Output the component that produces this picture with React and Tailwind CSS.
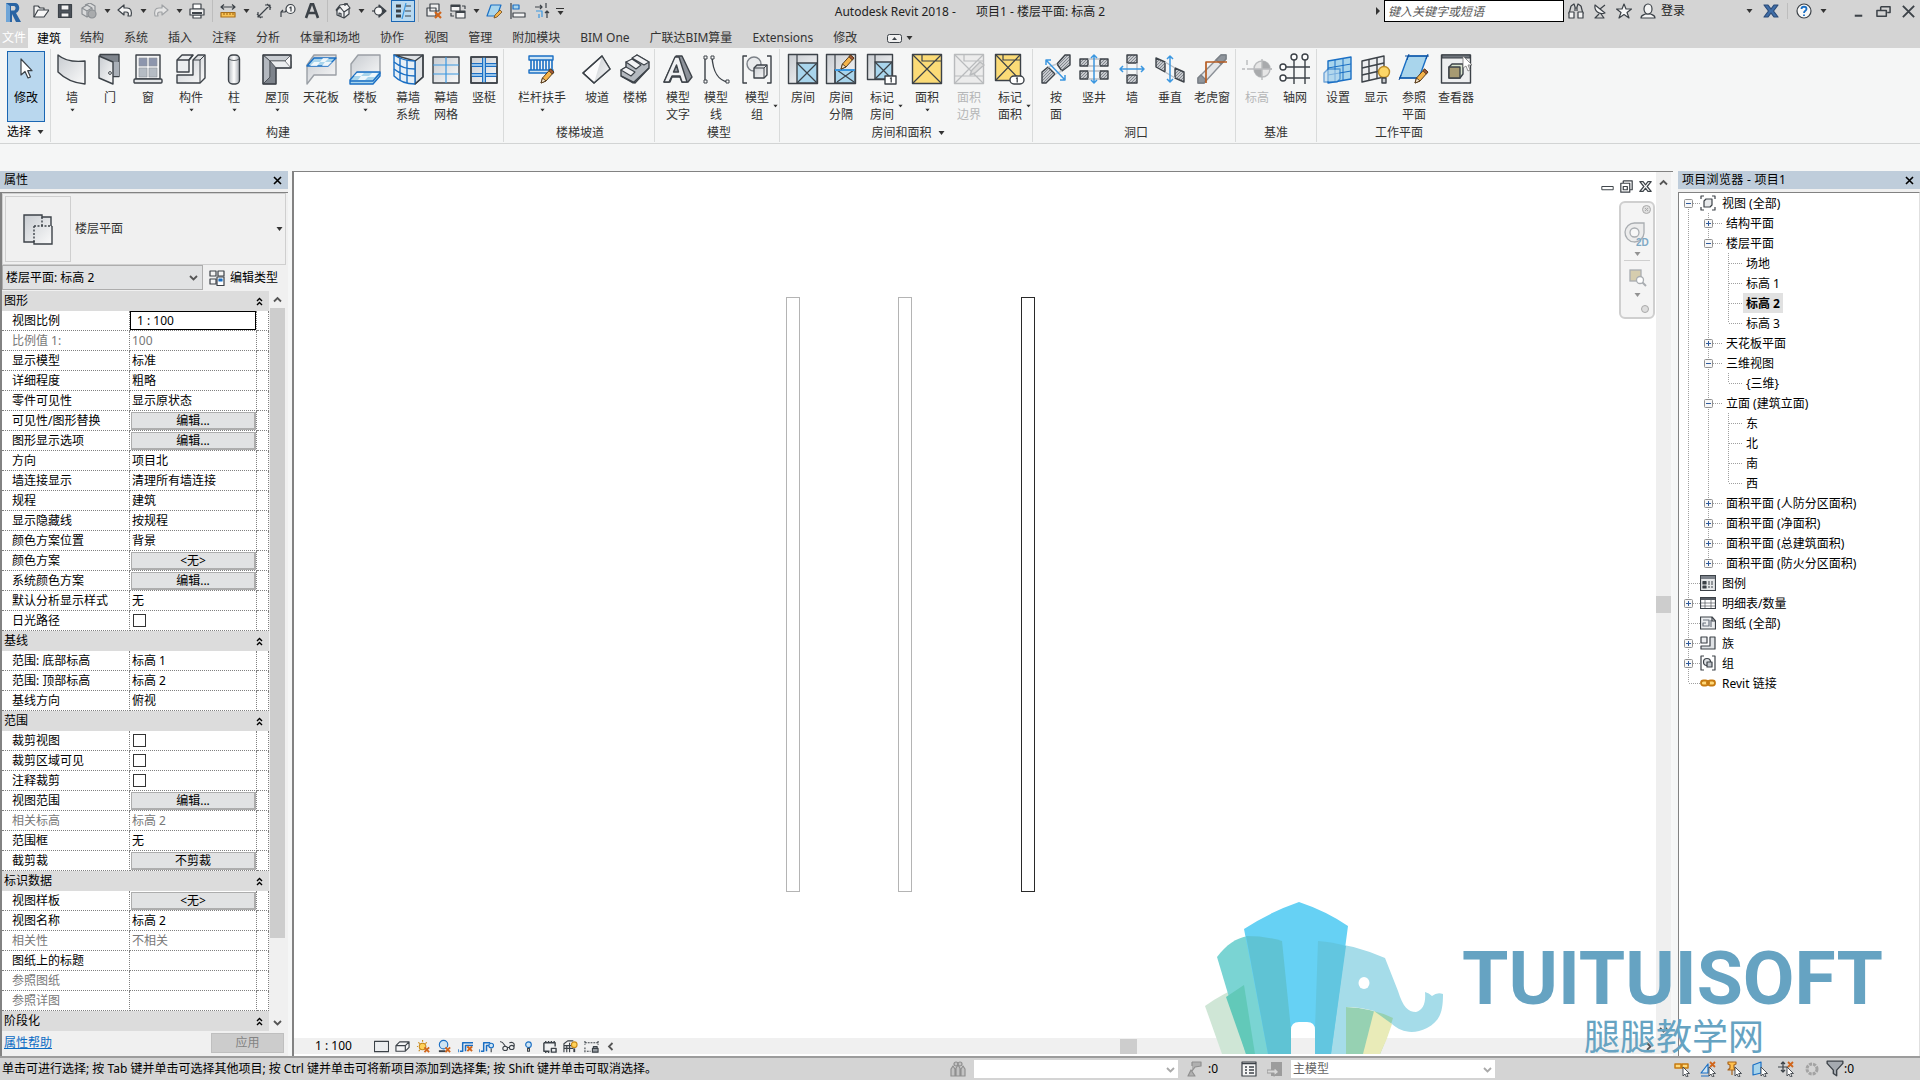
import { useState } from "react";
import clsx from "clsx";

const INK = "#3c4248";
const BLUE = "#1a6fc4";
const SKY = "#a9d5ec";

function Pencil({ x = 0, y = 0 }) {
  return (
    <g transform={`translate(${x} ${y})`} strokeWidth="1">
      <path d="M1 15 L2.5 10 L10.5 1 L14 4 L6 13 Z" fill="#f5b44a" stroke="#5a3d1c" />
      <path d="M9 2.8 L10.5 1 L14 4 L12.3 6 Z" fill="#a55a3c" stroke="#5a3d1c" />
      <path d="M1 15 L2.5 10 L6 13 Z" fill="#f8ead2" stroke="#5a3d1c" />
    </g>
  );
}

function Icon32({ children }) {
  return (
    <svg width="32" height="32" viewBox="0 0 32 32" fill="none" stroke={INK} strokeWidth="1.4" strokeLinejoin="round" aria-hidden="true">
      {children}
    </svg>
  );
}

const TOOL_ICONS = {
  cursor: <path d="M11 7 V23 L15 19.5 L18 26 L20.5 25 L17.7 18.7 H22 Z" fill="#fff" strokeWidth="1.2" />,
  wall: <path d="M2 2 C9 8 20 9 29 8 V31 C17 30 8 25 2 19 Z" fill="url(#steel)" />,
  door: (
    <>
      <rect x="6" y="1.5" width="19" height="22" fill="#7f858d" />
      <path d="M19 9 H25 V23 H19 Z" fill="#aab0b8" stroke="none" />
      <path d="M5 3 L19 9 V31 L5 25 Z" fill="url(#steel)" />
      <circle cx="16" cy="20" r="1.4" fill="#fff" strokeWidth="1" />
    </>
  ),
  window: (
    <>
      <rect x="4" y="2" width="24" height="24" fill="#f2f3f4" />
      <g fill="#8d96ad" stroke="#8d949c" strokeWidth=".6">
        <path d="M7 5 H15 V13 H7 Z M17 5 H25 V13 H17 Z" />
        <path d="M7 15 H15 V24 H7 Z M17 15 H25 V24 H17 Z" fill="#b5bcc4" />
      </g>
      <rect x="2" y="26" width="28" height="4" rx="1" fill="#e6e8ea" />
    </>
  ),
  component: (
    <>
      <path d="M2 7 L7 2 H18 L14 7 V19 H2 Z" fill="#eceef0" />
      <path d="M2 7 H14 L18 2" />
      <path d="M18 7 L23 2 H30 V25 L25 30 H2 V22 H18 Z" fill="url(#steel)" />
      <path d="M18 7 H25 L30 2 M25 7 V30" strokeWidth="1" />
    </>
  ),
  column: (
    <>
      <rect x="10.5" y="2" width="11" height="29" rx="4" fill="url(#steelH)" />
      <path d="M11 6 C13 8 19 8 21 6" strokeWidth=".8" />
    </>
  ),
  roof: (
    <>
      <path d="M2 2 H30 L24 8 H9 Z" fill="#c9cdd2" strokeWidth=".8" />
      <path d="M9 8 H30 V15 H15 Z" fill="#eceef0" strokeWidth=".6" />
      <path d="M2 2 L9 8 V24 L2 31 Z" fill="#b3b8bf" strokeWidth=".8" />
      <path d="M9 8 L15 15 V31 H2 L9 24 Z" fill="#7d838b" strokeWidth=".6" />
      <path d="M24 8 L30 2 V15 Z" fill="#f8f8f9" strokeWidth=".6" />
      <path d="M2 2 H30 V15 H15 V31 H2 Z" />
    </>
  ),
  ceiling: (
    <>
      <path d="M2 12 L9 2 H31 V22 H9 L2 31 Z" fill="url(#steel)" stroke="#9a9fa5" />
      <path d="M2 13 L9 5 H31 L23 13 Z" fill={SKY} stroke={BLUE} />
      <path d="M9 9 H15 L18 5 H24 L20 9 H27 L23 13 H17 L20 9 H15 L12 13 H5 Z" fill="#fff" stroke="none" opacity=".8" />
    </>
  ),
  floor: (
    <>
      <path d="M2 19 V11 L9 2 H31 V20 H9 L2 28 Z" fill="url(#steel)" stroke="#9a9fa5" />
      <path d="M1 27 L8 19 H31 V23 L24 31 H1 Z" fill={SKY} stroke={BLUE} />
      <path d="M8 20 H15 L12 23 H20 L23 20 H29 L26 24 H19 L16 27 H9 L12 23 H5 Z" fill="#fff" stroke="none" opacity=".8" />
      <path d="M1 28 H24 L31 20" stroke={BLUE} />
    </>
  ),
  curtainSystem: (
    <>
      <path d="M2 2 H31 V24 L23 31 V8 Z" fill="#dfe2e5" />
      <path d="M2 2 C8 6 15 8 23 8 V31 C14 31 7 28 2 23 Z" fill="#e6eff6" stroke={BLUE} />
      <path d="M2 9 C8 14 16 16 23 16 M2 16 C8 21 16 23 23 23 M8 5 V27 M15 7 V30" stroke={BLUE} />
      <path d="M23 8 L31 2 V24 L23 31" />
    </>
  ),
  curtainGrid: (
    <>
      <rect x="3" y="4" width="26" height="26" fill="url(#steel)" />
      <path d="M16 4 V30 M3 12 H29 M3 21 H29" stroke="#3b97e0" strokeWidth="1.2" />
    </>
  ),
  mullion: (
    <>
      <rect x="3" y="4" width="26" height="26" fill="url(#steel)" />
      <path d="M3 12 H29 M3 22 H29" stroke={BLUE} strokeWidth="4" />
      <path d="M3 12 H29 M3 22 H29" stroke="#bfe0f6" strokeWidth="1.5" />
      <path d="M16 4 V30" stroke={BLUE} strokeWidth="4" />
      <path d="M16 4 V30" stroke="#bfe0f6" strokeWidth="1.5" />
      <rect x="3" y="4" width="26" height="26" />
    </>
  ),
  railing: (
    <>
      <path d="M3 3 H27 V7 H3 Z M3 17 H27 V20 H3 Z" fill="#cfe5f4" stroke={BLUE} />
      <path d="M5 7 V17 M8 7 V17 M11 7 V17 M14 7 V17 M17 7 V17 M20 7 V17 M23 7 V17 M26 7 V17" stroke={BLUE} strokeWidth="1.6" />
      <Pencil x={14} y={15} />
    </>
  ),
  ramp: (
    <>
      <path d="M2 20 L21 3 L29 16 L13 30 Z" fill="#fbfbfc" />
      <path d="M13 30 L21 3 L29 16 Z" fill="url(#steel)" stroke="none" />
      <path d="M2 20 L21 3 L29 16 L13 30 Z" />
    </>
  ),
  stair: (
    <>
      <path d="M2 17 L7 14 V9 L13 11 V6 L18 2 L30 9 V15 L16 30 L2 23 Z" fill="#b4b9bf" />
      <path d="M2 17 L7 14 L16 19 L12 23 Z M7 9 L13 6 L22 12 L17 16 Z M13 5 L18 2 L30 9 L25 12 Z" fill="#f2f3f5" strokeWidth="1.1" />
      <path d="M2 23 L14 30 L30 15" />
    </>
  ),
  modelText: (
    <>
      <path d="M2 29 L14 3 H20 L30 24 L26 29 H20 L18 24 H10 L8 29 Z" fill="#8d929a" />
      <path d="M2 29 L13 4 H17 L25 29 H20 L18 23 H10 L7 29 Z M11.5 19 H16.5 L14.5 12 Z" fill="#f0f1f3" />
    </>
  ),
  modelLine: (
    <>
      <path d="M5 4 V29 M12 4 C13 18 17 27 28 29" />
      <path d="M4 3 H7 V6 H4 Z M4 27 H7 V30 H4 Z M11 3 H14 V6 H11 Z M26 27 H29 V30 H26 Z" fill="#fff" strokeWidth="1" />
    </>
  ),
  modelGroup: (
    <>
      <path d="M6 3 H2 V30 H6 M26 3 H30 V30 H26" />
      <circle cx="13" cy="11" r="7" fill="#e9ebed" stroke="#7b8087" />
      <path d="M13 15 L16 12 H26 V22 L23 25 H13 Z" fill="url(#steel)" />
      <path d="M13 15 H23 V25 M23 15 L26 12" strokeWidth="1" />
    </>
  ),
  room: (
    <>
      <rect x="1.5" y="1.5" width="29" height="29" fill="url(#steel)" />
      <rect x="10" y="10" width="20" height="20" fill={SKY} />
      <path d="M10 2 V10 M10 10 L30 30 M30 10 L10 30" strokeWidth="1.2" />
    </>
  ),
  roomSeparator: (
    <>
      <rect x="1.5" y="1.5" width="29" height="29" fill="url(#steel)" />
      <rect x="10" y="17" width="20" height="13" fill={SKY} />
      <path d="M10 2 V30 M12 29 L29 17 M12 17 L29 29" strokeWidth="1.2" />
      <path d="M10 17 H30" stroke="#3b97e0" strokeWidth="2" />
      <Pencil x={15} y={1} />
    </>
  ),
  tagRoom: (
    <>
      <rect x="1.5" y="1.5" width="25" height="25" fill="url(#steel)" />
      <rect x="9" y="9" width="17" height="17" fill={SKY} />
      <path d="M9 2 V9 M9 9 L26 26 M26 9 L9 26" strokeWidth="1.2" />
      <rect x="19" y="23" width="11" height="8" fill="#fff" />
      <path d="M24 25.5 L25.2 24.8 V29.5" strokeWidth="1.3" />
    </>
  ),
  area: (
    <>
      <rect x="1.5" y="1.5" width="29" height="29" fill="#fbdb77" />
      <path d="M2 2 L30 30 M30 2 L2 30 M11 2 V8 H30" strokeWidth="1.2" />
    </>
  ),
  areaBoundary: (
    <g stroke="#b9bbbd">
      <rect x="1.5" y="1.5" width="29" height="29" fill="#ececec" />
      <path d="M2 2 L30 30 M30 2 L2 30 M11 2 V8 H30 M2 23 H30" strokeWidth="1.2" />
      <path d="M17 22 L19 17 L27 9 L31 12 L22 20 Z" fill="#dcdcdc" />
    </g>
  ),
  tagArea: (
    <>
      <rect x="1.5" y="1.5" width="25" height="26" fill="#fbdb77" />
      <path d="M2 2 L26 27 M26 2 L2 27 M9 2 V7 H26" strokeWidth="1.2" />
      <rect x="16" y="23" width="14" height="8" rx="4" fill="#fff" />
      <path d="M22 25.5 L23.2 24.8 V29.5" strokeWidth="1.3" />
    </>
  ),
  openFace: (
    <>
      <path d="M17 11 L25 2 H30 V12 L22 18 Z" fill="url(#hatch)" />
      <path d="M2 19 L8 14 L15 21 L6 30 H2 Z" fill="url(#hatch)" />
      <path d="M8 14 L17 11 M15 21 L22 18" stroke="#c7cacd" />
      <path d="M6 7 L25 27 M6 12 V7 H11 M25 22 V27 H20" stroke="#3b97e0" strokeWidth="1.5" />
    </>
  ),
  shaft: (
    <>
      <path d="M2 6 H10 V13 H2 Z M22 6 H30 V13 H22 Z M2 18 H10 V26 H2 Z M22 18 H30 V26 H22 Z" fill="url(#hatch)" />
      <path d="M10 6 H22 M10 13 H22 M10 18 H22 M10 26 H22" stroke="#b9bdc2" />
      <path d="M16 3 V29 M13 5 L16 2 L19 5 M13 27 L16 30 L19 27" stroke="#3b97e0" strokeWidth="1.5" />
    </>
  ),
  wallOpening: (
    <>
      <path d="M11 2 H21 V10 H11 Z M11 22 H21 V30 H11 Z" fill="url(#hatch)" />
      <path d="M11 10 V22 M21 10 V22" stroke="#b9bdc2" />
      <path d="M4 16 H28 M7 13 L4 16 L7 19 M25 13 L28 16 L25 19" stroke="#3b97e0" strokeWidth="1.5" />
    </>
  ),
  vertical: (
    <>
      <path d="M2 5 L11 9 V19 L2 14 Z M21 15 L30 19 V29 L21 25 Z" fill="url(#hatch)" />
      <path d="M11 9 L21 15 M11 19 L21 25" stroke="#b9bdc2" />
      <path d="M16 3 V29 M13 6 L16 3 L19 6 M13 26 L16 29 L19 26" stroke="#3b97e0" strokeWidth="1.5" />
    </>
  ),
  dormer: (
    <>
      <path d="M2 30 V25 L25 2 H30 V6 L8 30 Z" fill="#e4e6e8" stroke="#8b9097" />
      <path d="M20 7 L25 2 H30 V6 L25 11 Z M2 30 V25 L5 22 L10 27 L8 30 Z" fill="#8f959c" stroke="#7a8087" />
      <path d="M10 30 V9 H31" stroke="#b65c22" strokeWidth="1.7" />
    </>
  ),
  level: (
    <g stroke="#b9bbbd">
      <path d="M1 16 H4 M6 16 H11 M31 16 H28 M6 7 V12" />
      <circle cx="21" cy="16" r="8" fill="#e6e6e6" />
      <path d="M21 8 A8 8 0 0 1 29 16 H21 Z M21 24 A8 8 0 0 1 13 16 H21 Z" fill="#a8aaac" stroke="none" />
      <path d="M21 6 V27 M11 16 H31" />
    </g>
  ),
  grid: (
    <>
      <path d="M15 7 V31 M26 7 V31 M7 14 H31 M7 25 H31" />
      <g fill="#fff">
        <circle cx="15" cy="4" r="3" />
        <circle cx="26" cy="4" r="3" />
        <circle cx="4" cy="14" r="3" />
        <circle cx="4" cy="25" r="3" />
      </g>
    </>
  ),
  setPlane: (
    <>
      <path d="M6 8 L29 4 V26 L6 30 Z" fill={SKY} stroke={BLUE} />
      <path d="M6 15 L29 11 M6 22 L29 18 M13 7 V29 M21 5 V28" stroke={BLUE} strokeWidth="1" />
      <path d="M2 20 L6 16 H18 V26 L15 29 H2 Z" fill="#b9d9ee" stroke={BLUE} opacity=".6" />
    </>
  ),
  showPlane: (
    <>
      <path d="M2 8 L24 3 V24 L2 29 Z" fill="#eceef0" />
      <path d="M2 15 L24 10 M2 22 L24 17 M9 6 V27 M17 5 V26" />
      <circle cx="24" cy="19" r="5.5" fill="#fcd667" stroke="#b98a26" />
      <path d="M22 25 H26 V30 H22 Z" fill="#c7cacd" />
    </>
  ),
  refPlane: (
    <>
      <path d="M10 3 H29 L21 25 H2 Z" fill={SKY} stroke={BLUE} />
      <path d="M7 3 H31 M1 25 H23 M11 1 L9 7 M30 1 L28 6 M3 22 L1 27" stroke="#0d4f9c" strokeWidth="1" />
      <Pencil x={16} y={15} />
    </>
  ),
  viewer: (
    <>
      <rect x="1.5" y="2" width="29" height="28" fill="#eeeff0" />
      <path d="M2 2 H30 V5 H2 Z" fill="#6f757c" strokeWidth="1" />
      <path d="M9 14 L12 11 H23 V21 L20 25 H9 Z" fill="#d9e5cf" />
      <path d="M9 14 H20 V25 H9 Z" fill="#a79a72" />
      <path d="M23 3 V15 L26 13 L28 18 L30 17 L28 12 H32 Z" fill="#fff" stroke="#777" strokeWidth=".8" />
    </>
  ),
};

const RIBBON = [
  {
    title: "构建", pad: "pl-0.5",
    tools: [
      { icon: "wall", label: "墙", w: "w-[38px]", arrow: "below" },
      { icon: "door", label: "门", w: "w-[38px]" },
      { icon: "window", label: "窗", w: "w-[38px]" },
      { icon: "component", label: "构件", w: "w-12", arrow: "below" },
      { icon: "column", label: "柱", w: "w-[38px]", arrow: "below" },
      { icon: "roof", label: "屋顶", w: "w-12", arrow: "below" },
      { icon: "ceiling", label: "天花板", w: "w-10" },
      { icon: "floor", label: "楼板", w: "w-12", arrow: "below" },
      { icon: "curtainSystem", label: "幕墙", sub: "系统", w: "w-[38px]" },
      { icon: "curtainGrid", label: "幕墙", sub: "网格", w: "w-[38px]" },
      { icon: "mullion", label: "竖梃", w: "w-[38px]" },
    ],
  },
  {
    title: "楼梯坡道", pad: "pl-0.5",
    tools: [
      { icon: "railing", label: "栏杆扶手", w: "w-[72px]", arrow: "below" },
      { icon: "ramp", label: "坡道", w: "w-[38px]" },
      { icon: "stair", label: "楼梯", w: "w-[38px]" },
    ],
  },
  {
    title: "模型", pad: "pl-1",
    tools: [
      { icon: "modelText", label: "模型", sub: "文字", w: "w-[38px]" },
      { icon: "modelLine", label: "模型", sub: "线", w: "w-[38px]" },
      { icon: "modelGroup", label: "模型", sub: "组", w: "w-11", arrow: "side" },
    ],
  },
  {
    title: "房间和面积", pad: "pl-1", more: true,
    tools: [
      { icon: "room", label: "房间", w: "w-[38px]" },
      { icon: "roomSeparator", label: "房间", sub: "分隔", w: "w-[38px]" },
      { icon: "tagRoom", label: "标记", sub: "房间", w: "w-11", arrow: "side" },
      { icon: "area", label: "面积", w: "w-[46px]", arrow: "below" },
      { icon: "areaBoundary", label: "面积", sub: "边界", w: "w-[38px]", disabled: true },
      { icon: "tagArea", label: "标记", sub: "面积", w: "w-11", arrow: "side" },
    ],
  },
  {
    title: "洞口", pad: "pl-1",
    tools: [
      { icon: "openFace", label: "按", sub: "面", w: "w-[38px]" },
      { icon: "shaft", label: "竖井", w: "w-[38px]" },
      { icon: "wallOpening", label: "墙", w: "w-[38px]" },
      { icon: "vertical", label: "垂直", w: "w-[38px]" },
      { icon: "dormer", label: "老虎窗", w: "w-[46px]" },
    ],
  },
  {
    title: "基准", pad: "px-0.5",
    tools: [
      { icon: "level", label: "标高", w: "w-[38px]", disabled: true },
      { icon: "grid", label: "轴网", w: "w-[38px]" },
    ],
  },
  {
    title: "工作平面", pad: "pl-0.5", last: true,
    tools: [
      { icon: "setPlane", label: "设置", w: "w-[38px]" },
      { icon: "showPlane", label: "显示", w: "w-[38px]" },
      { icon: "refPlane", label: "参照", sub: "平面", w: "w-[38px]" },
      { icon: "viewer", label: "查看器", w: "w-[46px]" },
    ],
  },
];

const TABS = ["结构", "系统", "插入", "注释", "分析", "体量和场地", "协作", "视图", "管理", "附加模块", "BIM One", "广联达BIM算量", "Extensions", "修改"];

const PROPERTIES = [
  {
    title: "图形",
    rows: [
      ["视图比例", "1 : 100", "input"],
      ["比例值 1:", "100", "muted"],
      ["显示模型", "标准"],
      ["详细程度", "粗略"],
      ["零件可见性", "显示原状态"],
      ["可见性/图形替换", "编辑...", "button"],
      ["图形显示选项", "编辑...", "button"],
      ["方向", "项目北"],
      ["墙连接显示", "清理所有墙连接"],
      ["规程", "建筑"],
      ["显示隐藏线", "按规程"],
      ["颜色方案位置", "背景"],
      ["颜色方案", "<无>", "button"],
      ["系统颜色方案", "编辑...", "button"],
      ["默认分析显示样式", "无"],
      ["日光路径", "", "check"],
    ],
  },
  {
    title: "基线",
    rows: [
      ["范围: 底部标高", "标高 1"],
      ["范围: 顶部标高", "标高 2"],
      ["基线方向", "俯视"],
    ],
  },
  {
    title: "范围",
    rows: [
      ["裁剪视图", "", "check"],
      ["裁剪区域可见", "", "check"],
      ["注释裁剪", "", "check"],
      ["视图范围", "编辑...", "button"],
      ["相关标高", "标高 2", "muted"],
      ["范围框", "无"],
      ["截剪裁", "不剪裁", "button"],
    ],
  },
  {
    title: "标识数据",
    rows: [
      ["视图样板", "<无>", "button"],
      ["视图名称", "标高 2"],
      ["相关性", "不相关", "muted"],
      ["图纸上的标题", ""],
      ["参照图纸", "", "muted"],
      ["参照详图", "", "muted"],
    ],
  },
  { title: "阶段化", rows: [] },
];

// cols: one code per indent column; "|" passes a line through, "+"/"-" is an expander,
// "t" is a tee, "l" the last elbow. "s" starts a line at the node, "e" ends it there.
const TREE = [
  { cols: ["-s"], label: "视图 (全部)", icon: "views" },
  { cols: ["|", "+"], label: "结构平面" },
  { cols: ["|", "-"], label: "楼层平面" },
  { cols: ["|", "|", "t"], label: "场地" },
  { cols: ["|", "|", "t"], label: "标高 1" },
  { cols: ["|", "|", "t"], label: "标高 2" },
  { cols: ["|", "|", "l"], label: "标高 3" },
  { cols: ["|", "+"], label: "天花板平面" },
  { cols: ["|", "-"], label: "三维视图" },
  { cols: ["|", "|", "l"], label: "{三维}" },
  { cols: ["|", "-"], label: "立面 (建筑立面)" },
  { cols: ["|", "|", "t"], label: "东" },
  { cols: ["|", "|", "t"], label: "北" },
  { cols: ["|", "|", "t"], label: "南" },
  { cols: ["|", "|", "l"], label: "西" },
  { cols: ["|", "+"], label: "面积平面 (人防分区面积)" },
  { cols: ["|", "+"], label: "面积平面 (净面积)" },
  { cols: ["|", "+"], label: "面积平面 (总建筑面积)" },
  { cols: ["|", "+e"], label: "面积平面 (防火分区面积)" },
  { cols: ["t"], label: "图例", icon: "legend" },
  { cols: ["+"], label: "明细表/数量", icon: "schedule" },
  { cols: ["t"], label: "图纸 (全部)", icon: "sheet" },
  { cols: ["+"], label: "族", icon: "family" },
  { cols: ["+"], label: "组", icon: "group" },
  { cols: ["l"], label: "Revit 链接", icon: "link" },
];

const TREE_ICONS = {
  views: (
    <>
      <path d="M4 1 H1 V4 M12 1 H15 V4 M4 15 H1 V12 M12 15 H15 V12" />
      <path d="M4 6 L6 4 H12 V10 L10 12 H4 Z" fill="#e8eaec" />
    </>
  ),
  legend: (
    <>
      <path d="M.5 .5 H15.5 V15.5 H.5 Z" fill="#e6e8ea" />
      <path d="M1 1 H15 V4 H1 Z" fill="#7c828a" stroke="none" />
      <path d="M3 6.5 H6 V9 H3 Z M3 11 H6 V13 H3 Z" fill={INK} />
      <path d="M8 7 H14 M8 9 H14 M8 12 H14" strokeDasharray="2 1" />
    </>
  ),
  schedule: (
    <>
      <path d="M.5 2.5 H15.5 V13.5 H.5 Z" fill="#fff" />
      <path d="M1 3 H15 V5 H1 Z" fill="#565c63" stroke="none" />
      <path d="M1 8 H15 M1 11 H15 M5 5 V13 M11 5 V13" strokeWidth=".6" />
    </>
  ),
  sheet: (
    <>
      <path d="M.5 2 H12 L15.5 6 V14 H.5 Z" fill="#eceef0" />
      <path d="M3 5 H9 V11 H3 V8 H6 M11 5 V12" stroke="#6c7480" />
      <path d="M12 2 V6 H15.5" />
    </>
  ),
  family: (
    <>
      <path d="M1 2 H7 V8 H1 Z" fill="#eceef0" />
      <path d="M10 2 H15 V14 H1 V11 H10 Z" fill="#dfe2e5" />
    </>
  ),
  group: (
    <>
      <path d="M4 1 H1 V15 H4 M12 1 H15 V15 H12" />
      <circle cx="7" cy="7" r="3.5" fill="#dfe2e5" />
      <path d="M7 7 H12 V12 H7 Z" fill="#c3c8ce" />
    </>
  ),
  link: (
    <g stroke="#c67a10" strokeWidth="1.8">
      <rect x="1" y="5.5" width="7" height="5" rx="2.5" fill="#ffd97a" />
      <rect x="8" y="5.5" width="7" height="5" rx="2.5" fill="#ffd97a" />
      <path d="M6 8 H10" />
    </g>
  ),
};

const QAT = [
  {
    id: "打开",
    art: (
      <>
        <path d="M1 14 V3 H5 L7 5 H11 V7" fill="#f0f0f0" />
        <path d="M1 14 L5 7 H16 L11 14 Z" fill="#f7f7f7" />
      </>
    ),
  },
  {
    id: "保存",
    art: (
      <>
        <path d="M1.5 1.5 H14.5 V14.5 H1.5 Z" fill="#4d545c" />
        <path d="M4 2 H12 V7 H4 Z M4 10 H12 V14 H4 Z" fill="#f3f3f3" />
      </>
    ),
  },
  {
    id: "同步", arrow: true,
    art: (
      <g stroke="#8b8f93">
        <path d="M1 5 L6 2 L11 5 V11 L6 14 L1 11 Z M4 2 L9 0 L14 3 V8" fill="#d9dadb" />
        <path d="M1 5 L6 8 L11 5 M6 8 V14" />
        <circle cx="11" cy="11" r="4" fill="#a9abad" />
      </g>
    ),
  },
  { id: "放弃", arrow: true, art: <path d="M1 7 L7 2 V5 H10 C14 5 15 8 14 13 H11 C12 10 11 9 9 9 H7 V12 Z" fill="#f3f3f3" /> },
  { id: "重做", arrow: true, art: <path d="M15 7 L9 2 V5 H6 C2 5 1 8 2 13 H5 C4 10 5 9 7 9 H9 V12 Z" fill="#e4e4e4" stroke="#a0a3a6" /> },
  {
    id: "打印", sep: true,
    art: (
      <>
        <path d="M4 1 H12 V6 H4 Z M4 12 H12 V15 H4 Z" fill="#fff" />
        <path d="M1 6 H15 V12 H1 Z" fill="#f0f0f0" />
        <path d="M3 10 H13" strokeWidth="2" />
      </>
    ),
  },
  {
    id: "测量", arrow: true,
    art: (
      <>
        <path d="M1 4 H15 M4 1.5 L1 4 L4 6.5 M12 1.5 L15 4 L12 6.5" />
        <path d="M1 9.5 H15 V14 H1 Z" fill="#f9c355" stroke="#a9701c" />
        <path d="M4 10 V12 M7 10 V12 M10 10 V12 M13 10 V12" stroke="#a9701c" />
      </>
    ),
  },
  { id: "对齐尺寸标注", art: <path d="M2 14 L14 2 M9 2 H14 V7 M2 9 V14 H7 M11 1 L15 5 M1 11 L5 15" /> },
  {
    id: "标记",
    art: (
      <>
        <path d="M1 14 V9 H5 L7 7 M1 9 L3 7" />
        <circle cx="10.5" cy="6" r="4.5" fill="#f5f5f5" />
        <path d="M9.5 5 L11 4 V8.5" />
      </>
    ),
  },
  { id: "文字", sep: true, art: <path d="M2 15 L7 1 H9 L14 15 M4 10 H12" strokeWidth="2.6" /> },
  {
    id: "默认三维视图", arrow: true,
    art: (
      <>
        <path d="M2 7 V12 L9 15 L14 11 V6" fill="#eceef0" />
        <path d="M1 7 L5 2 L12 1 L15 5 L9 9 L5 4 L1 8 M9 9 V15" fill="#f4f4f4" />
        <path d="M4 13 V10 L6 10.5 V13.5 M10 3 V0 H12 V2" />
      </>
    ),
  },
  {
    id: "剖面",
    art: (
      <>
        <path d="M8 2 L15 8 L8 14 Z" fill={INK} />
        <circle cx="7.5" cy="8" r="4" fill="#f7f7f7" />
        <path d="M1 8 H4" />
      </>
    ),
  },
  {
    id: "细线", active: true, sep: true,
    art: (
      <>
        <path d="M1 3 H6 M1 8 H6 M1 13 H6" strokeWidth="3" />
        <path d="M10 3 H16 M10 8 H16 M10 13 H16" strokeWidth="1" />
        <path d="M11 0 L7 16" stroke="#3b97e0" />
      </>
    ),
  },
  {
    id: "关闭隐藏窗口",
    art: (
      <>
        <path d="M4 1 H13 V8 H4 Z M1 5 H10 V13 H1 Z" fill="#f0f0f0" />
        <path d="M9 9 L15 15 M15 9 L9 15" stroke="#d0651b" strokeWidth="2.2" />
      </>
    ),
  },
  {
    id: "切换窗口", arrow: true,
    art: (
      <>
        <path d="M1 2 H10 V8 H1 Z M6 8 H15 V15 H6 Z" fill="#f4f4f4" />
        <path d="M6 9 H15 M1 3 H10" strokeWidth="2" />
        <path d="M12 3 H15 V6 M1 10 V13 H4" />
      </>
    ),
  },
  {
    id: "参照平面",
    art: (
      <>
        <path d="M5 2 H15 L11 13 H1 Z" fill={SKY} stroke={BLUE} />
        <path d="M8 15 L9 12 L14 7 L16 9 L11 14 Z" fill="#f5b44a" stroke="#6d4a20" strokeWidth=".8" />
      </>
    ),
  },
  {
    id: "对齐",
    art: (
      <>
        <path d="M1 0 V16" />
        <path d="M3 2 H9 V6 H3 Z" fill={SKY} stroke={BLUE} />
        <path d="M3 10 H15 V14 H3 Z" fill="#f4f4f4" />
      </>
    ),
  },
  {
    id: "修剪", more: true,
    art: (
      <>
        <path d="M1 4 H8 M6 2 L8 4 L6 6 M13 15 V8 M11 10 L13 8 L15 10 M12 0 V5" />
        <path d="M2 8 H8 V14 M5 11 V15" stroke="#3b97e0" />
      </>
    ),
  },
];

function Caret({ className = "" }) {
  return <svg width="7" height="4" viewBox="0 0 7 4" className={className} aria-hidden="true"><path d="M0.5 0 H6.5 L3.5 4 Z" fill="#333" /></svg>;
}

function Small({ children, size = 16 }) {
  return (
    <svg width={size} height={size} viewBox="0 0 16 16" fill="none" stroke={INK} strokeWidth="1.2" strokeLinejoin="round" aria-hidden="true">
      {children}
    </svg>
  );
}

function TitleBar() {
  return (
    <header className="flex h-7 items-start pb-1.5 text-[#222]">
      <button className="flex h-6 w-[29px] items-center pl-1" aria-label="应用程序菜单">
        <svg width="18" height="20" viewBox="0 0 18 20" aria-hidden="true">
          <path d="M2 1 H11 C16 1 17 9 12 11 L17 20 H12 L8 12 V20 H2 Z" fill="#2a64a3" />
          <path d="M2 1 L6 4 V20 H2 Z" fill="#6fa5d8" />
          <path d="M7 4 H10 C12 4 12 8 10 8.5 H7 Z" fill="#d4d4d4" />
        </svg>
      </button>
      {QAT.map((item) => (
        <div key={item.id} className="flex h-[22px] items-center">
          <button
            aria-label={item.id}
            className={clsx("flex h-[22px] w-6 items-center justify-center", item.active && "border border-[#1a66b3] bg-[#b9d9f0]")}
          >
            <Small>{item.art}</Small>
          </button>
          {item.arrow && <span className="flex w-3 justify-center"><Caret /></span>}
          {item.sep && <span className="flex w-[7px] justify-center"><span className="h-[22px] w-px bg-[#bdbdbd]" /></span>}
          {item.more && <span className="flex w-3 flex-col items-center gap-0.5"><span className="h-px w-2 bg-[#333]" /><Caret /></span>}
        </div>
      ))}
      <h1 className="flex flex-1 justify-center gap-5 whitespace-pre leading-6">
        <span>Autodesk Revit 2018 -</span>
        <span>项目1 - 楼层平面: 标高 2</span>
      </h1>
      <div className="flex h-[22px] items-center">
        <svg width="10" height="8" viewBox="0 0 10 8" aria-hidden="true"><path d="M2 0 L6 4 L2 8 Z" fill="#333" /></svg>
        <input aria-label="搜索" placeholder="键入关键字或短语" className="h-[22px] w-[180px] border border-black bg-white pl-[3px] italic placeholder:text-[#555]" />
        <div className="flex w-[92px] items-center justify-between pl-1">
          <button aria-label="搜索">
            <Small>
              <path d="M3 3 L6 1 L7 4 V8 M13 3 L10 1 L9 4 V8 M7 5 H9 M3 3 L1 11 M13 3 L15 11" />
              <rect x="1" y="9" width="5" height="6" fill="#f4f4f4" />
              <rect x="10" y="9" width="5" height="6" fill="#f4f4f4" />
            </Small>
          </button>
          <button aria-label="通讯中心">
            <Small>
              <path d="M3 2 C2 8 7 12 13 10 Z" fill="#f4f4f4" />
              <path d="M8 6 L13 2 M7 11 L3 15 H12 L9 11" />
            </Small>
          </button>
          <button aria-label="收藏夹">
            <Small><path d="M8 1 L10 6 H15.5 L11 9.5 L13 15 L8 11.5 L3 15 L5 9.5 L.5 6 H6 Z" fill="#f7f7f7" /></Small>
          </button>
          <button aria-label="用户">
            <Small>
              <path d="M1 15 C1 12 4 12 5.5 11 H10.5 C12 12 15 12 15 15 Z" fill="#f4f4f4" />
              <ellipse cx="8" cy="6" rx="4" ry="5" fill="#f4f4f4" />
            </Small>
          </button>
        </div>
        <button className="ml-[5px] w-[85px] text-left">登录</button>
        <Caret />
        <button aria-label="Exchange" className="ml-2.5">
          <Small><path d="M1 2 H5 L8 6 L11 2 H15 L10.5 8 L15 14 H11 L8 10 L5 14 H1 L5.5 8 Z" fill="#3f6ea8" stroke="#2a4a78" /></Small>
        </button>
        <span className="ml-2 h-4 w-px bg-[#bdbdbd]" />
        <button aria-label="帮助" className="ml-2">
          <Small>
            <circle cx="8" cy="8" r="7" fill="#f7f7f7" />
            <path d="M5.5 6 C5.5 3 10.5 3 10.5 6 C10.5 8 8 7.5 8 10 M8 11.5 V13" stroke={BLUE} strokeWidth="1.8" />
          </Small>
        </button>
        <Caret className="ml-2" />
        <div className="ml-6 flex items-center gap-2.5 pr-1">
          <button aria-label="最小化"><Small size={15}><path d="M4 12.5 H12" strokeWidth="2.2" /></Small></button>
          <button aria-label="还原"><Small size={15}><path d="M5 3 H15 V9 H12 M1 7 H11 V13 H1 Z M5 3 V6" strokeWidth="1.6" /></Small></button>
          <button aria-label="关闭"><Small size={15}><path d="M2 2 L14 14 M14 2 L2 14" strokeWidth="2" /></Small></button>
        </div>
      </div>
    </header>
  );
}

function TabRow() {
  return (
    <nav className="flex h-5 items-center leading-[22px] text-[#333]">
      <button className="w-7 text-center text-white">文件</button>
      <button className="h-5 bg-[#f5f6f6] px-[9px] text-black">建筑</button>
      {TABS.map((tab) => <button key={tab} className="px-2.5">{tab}</button>)}
      <button aria-label="最小化功能区" className="ml-5 flex items-center gap-1">
        <svg width="15" height="9" viewBox="0 0 15 9" fill="#f0f0f0" stroke={INK} aria-hidden="true">
          <rect x=".5" y=".5" width="14" height="8" rx="2" />
          <path d="M5 6 L7.5 3 L10 6 Z" fill={INK} stroke="none" />
        </svg>
        <Caret />
      </button>
    </nav>
  );
}

function Tool({ tool }) {
  return (
    <button
      disabled={tool.disabled}
      className={clsx("relative flex flex-col items-center whitespace-nowrap pt-[5px] leading-[17px]", tool.w, tool.disabled ? "text-[#b5b7b8]" : "text-[#333]")}
    >
      <Icon32>{TOOL_ICONS[tool.icon]}</Icon32>
      <span className="mt-1">{tool.label}</span>
      {tool.sub && <span>{tool.sub}</span>}
      {tool.arrow === "below" && <Caret className="mt-0.5 scale-75" />}
      {tool.arrow === "side" && <Caret className="absolute right-0 top-14 scale-75" />}
    </button>
  );
}

function Ribbon() {
  return (
    <section className="flex h-24 border-b border-[#d2d4d4] bg-[#f5f6f6]">
      <div className="my-px flex w-[51px] flex-col border-r border-[#d9dbdb] pl-[7px]">
        <button className="mt-0.5 flex h-[73px] w-[38px] flex-col items-center border border-[#1a66b3] bg-[#b9d7ee] leading-[17px]">
          <Icon32>{TOOL_ICONS.cursor}</Icon32>
          <span className="mt-[5px]">修改</span>
        </button>
        <button className="flex h-5 items-center gap-1.5 leading-5">选择 <Caret /></button>
      </div>
      {RIBBON.map((group) => (
        <div key={group.title} className={clsx("my-px flex flex-col border-[#d9dbdb]", group.pad, !group.last && "border-r")}>
          <div className="-mt-px flex flex-1 items-start">
            {group.tools.map((tool) => <Tool key={tool.icon} tool={tool} />)}
          </div>
          <div className="flex h-[18px] items-center justify-center gap-1.5 leading-[18px] text-[#333]">
            {group.title}
            {group.more && <Caret />}
          </div>
        </div>
      ))}
    </section>
  );
}

function PanelTitle({ children }) {
  return (
    <div className="flex h-[18px] items-center justify-between bg-[#bfcddb] pl-1 pr-1.5">
      <h2 className="leading-5">{children}</h2>
      <button aria-label="关闭">
        <svg width="9" height="9" viewBox="0 0 9 9" stroke="#000" strokeWidth="1.6" aria-hidden="true"><path d="M1 1 L8 8 M8 1 L1 8" /></svg>
      </button>
    </div>
  );
}

function PropertyValue({ id, value, kind }) {
  if (kind === "input") return <input id={id} defaultValue={value} className="block h-[19px] w-full border border-black bg-white pl-1.5" />;
  if (kind === "button") return <button id={id} className="mx-px block h-[18px] w-[125px] border border-b-2 border-r-2 border-[#adadad] bg-[#e1e2e3] leading-[15px]">{value}</button>;
  if (kind === "check") return <input id={id} type="checkbox" className="ml-[3px] block size-[13px] appearance-none border border-[#333] bg-white" />;
  return <span className="pl-0.5">{value}</span>;
}

function Chevron({ d, className }) {
  return <svg width="9" height="9" viewBox="0 0 9 9" fill="none" stroke="#555" strokeWidth="1.8" className={className} aria-hidden="true"><path d={d} /></svg>;
}

function PropertiesPanel() {
  return (
    <aside className="flex w-72 shrink-0 flex-col bg-[#f0f0f0]">
      <PanelTitle>属性</PanelTitle>
      <div className="mt-[3px] flex min-h-0 flex-1 flex-col border-l-2 border-t border-[#828282]">
        <button className="mr-0.5 flex h-[72px] items-center border border-[#cfcfcf] pl-0.5 text-left text-[#333]">
          <span className="flex size-[66px] items-center justify-center border border-[#cfcfcf]">
            <svg width="32" height="32" viewBox="0 0 32 32" fill="url(#steel)" stroke={INK} strokeWidth="1.4" aria-hidden="true">
              <path d="M2 2 H20 V4 H29 V13 H30 V31 H12 V29 H2 Z" stroke="none" />
              <path d="M12 29 H2 V2 H20 V4 H29 V13" fill="none" />
              <path d="M12 13 H30 M12 13 V29 M20 4 V13" strokeDasharray="2 1.5" fill="none" />
              <path d="M30 13 V31 H12 V28" fill="none" />
            </svg>
          </span>
          <span className="ml-1 flex-1">楼层平面</span>
          <Caret className="mr-0.5" />
        </button>
        <div className="flex items-center pb-px">
          <select aria-label="视图实例" className="h-[25px] w-[201px] appearance-none border border-[#adadad] bg-[#e1e2e3] pl-[3px]">
            <option>楼层平面: 标高 2</option>
          </select>
          <Chevron d="M1 3 L4.5 6.500 L8 3" className="-ml-3.5" />
          <button className="ml-[11px] flex items-center gap-[5px]">
            <Small>
              <path d="M1 1 H7 V6 H1 Z M9 1 H15 V6 H9 Z M1 9 H7 V14 H1 Z" fill="#f4f4f4" />
              <path d="M8 7 H15 V15.5 H8 Z" fill="#fff" />
              <path d="M10 9 H13 V11 H10 Z" fill={BLUE} stroke={BLUE} />
            </Small>
            编辑类型
          </button>
        </div>
        <div className="flex min-h-0 flex-1 overflow-hidden">
          <table className="w-[267px] table-fixed border-separate border-spacing-0 self-start bg-white">
            <colgroup>
              <col className="w-32" />
              <col className="w-[127px]" />
              <col className="w-3" />
            </colgroup>
            {PROPERTIES.map((section) => (
              <tbody key={section.title}>
                <tr>
                  <th colSpan={3} className="h-5 bg-[#dcdcdc] p-0 text-left font-normal">
                    <button className="flex h-5 w-full items-center justify-between pl-0.5 pr-1.5 leading-5">
                      {section.title}
                      <svg width="7" height="9" viewBox="0 0 7 9" fill="none" stroke="#000" strokeWidth="1.4" aria-hidden="true"><path d="M1 4 L3.5 1.5 L6 4 M1 8 L3.5 5.5 L6 8" /></svg>
                    </button>
                  </th>
                </tr>
                {section.rows.map(([name, value, kind]) => (
                  <tr key={name} className={kind === "muted" ? "text-[#787878]" : "text-black"}>
                    <td className="h-5 whitespace-nowrap border-b border-r border-dotted border-[#808080] p-0 pl-2.5 leading-[18px]">
                      <label htmlFor={name}>{name}</label>
                    </td>
                    <td className="h-5 whitespace-nowrap border-b border-r border-dotted border-[#808080] p-0 leading-[18px]">
                      <PropertyValue id={name} value={value} kind={kind} />
                    </td>
                    <td className="h-5 border-b border-r border-dotted border-[#808080] p-0" />
                  </tr>
                ))}
              </tbody>
            ))}
          </table>
          <div className="ml-px flex w-[15px] flex-col items-center justify-between py-1">
            <Chevron d="M1 6.5 L4.5 3 L8 6.500" />
            <span className="mb-20 mt-1 w-[15px] flex-1 bg-[#cdcdcd]" />
            <Chevron d="M1 3 L4.5 6.500 L8 3" />
          </div>
        </div>
        <div className="flex h-[25px] shrink-0 items-center justify-between pb-0.5 pl-0.5 pr-1">
          <a href="#help" className="text-[#0b6cc4] underline">属性帮助</a>
          <button disabled className="h-5 w-[73px] border border-[#bfbfbf] bg-[#cccccc] text-[#838383]">应用</button>
        </div>
      </div>
    </aside>
  );
}

function TreeGuide({ code }) {
  const kind = code[0];
  const box = kind === "+" || kind === "-";
  const top = code !== "-s";
  const bottom = kind !== "l" && code !== "+e";
  return (
    <svg width="20" height="20" viewBox="0 0 20 20" fill="none" stroke="#a0a0a0" strokeDasharray="1 1" className="shrink-0 overflow-visible" aria-hidden="true">
      {top && <path d="M9.5 0 V10" />}
      {bottom && <path d="M9.5 10 V20" />}
      {kind !== "|" && <path d="M10 10.5 H24" />}
      {box && (
        <g strokeDasharray="none">
          <rect x="5.5" y="6.5" width="8" height="8" rx="1" fill="#f7f7f7" stroke="#919191" />
          <path d="M7 10.5 H12" stroke="#2e5a9c" />
          {kind === "+" && <path d="M9.5 8 V13" stroke="#2e5a9c" />}
        </g>
      )}
    </svg>
  );
}

function ProjectBrowser() {
  const [selected, setSelected] = useState("标高 2");
  return (
    <aside className="flex w-[242px] shrink-0 flex-col bg-[#f0f0f0]">
      <PanelTitle><span className="tracking-wide">项目浏览器 - 项目1</span></PanelTitle>
      <div className="mt-[3px] flex-1 border-l border-r border-t border-[#828282] border-r-[#e0e0e0] bg-white">
        {TREE.map((node) => (
          <div key={node.label} className="flex h-5 items-center whitespace-nowrap">
            {node.cols.map((code, i) => <TreeGuide key={i} code={code} />)}
            {node.icon && <span className="relative ml-px bg-white"><Small>{TREE_ICONS[node.icon]}</Small></span>}
            <button
              onClick={() => setSelected(node.label)}
              className={clsx("h-5 leading-[21px]", node.icon ? "ml-1 px-0.5" : "ml-1 px-[3px]", selected === node.label && "bg-[#e1e1e1] font-bold")}
            >
              {node.label}
            </button>
          </div>
        ))}
      </div>
    </aside>
  );
}

const VIEW_CONTROLS = [
  { id: "详细程度", art: <path d="M.5 2.5 H15.5 V13.5 H.5 Z" fill="#eceef0" /> },
  { id: "视觉样式", art: <path d="M1 7 L5 3 H15 V9 L11 13 H1 Z M1 7 H11 V13 M11 7 L15 3" fill="#f4f5f6" /> },
  {
    id: "日光路径",
    art: (
      <>
        <circle cx="7" cy="8" r="3.5" fill="#ffd25a" stroke="#c98a1a" />
        <path d="M7 1 V3 M1 8 H2 M2.5 3.5 L4 5 M11.5 3.5 L10 5 M3 13 L4 11.5" stroke="#c98a1a" />
        <path d="M9 9 L14 14 M14 9 L9 14" stroke="#d0651b" strokeWidth="2" />
      </>
    ),
  },
  {
    id: "阴影",
    art: (
      <>
        <circle cx="7" cy="6" r="4.5" fill="#cfe5f4" stroke={BLUE} />
        <path d="M2 13 H9" strokeWidth="2" />
        <path d="M9 9 L14 14 M14 9 L9 14" stroke="#d0651b" strokeWidth="2" />
      </>
    ),
  },
  {
    id: "裁剪视图",
    art: (
      <>
        <path d="M0 11 V14 M2 13 H5 V4 H16 M8 13 V7 H16" stroke={BLUE} strokeWidth="1.6" />
        <path d="M10 8 L15 13 M15 8 L10 13" stroke="#d0651b" strokeWidth="2" />
      </>
    ),
  },
  {
    id: "显示裁剪区域",
    art: (
      <>
        <path d="M0 11 V14 M2 13 H5 V4 H12 M8 13 V7 H11" stroke={BLUE} strokeWidth="1.6" />
        <circle cx="13" cy="7" r="2.5" fill="#cfe5f4" stroke={BLUE} />
        <path d="M13 10 V14" />
      </>
    ),
  },
  { id: "临时隐藏", art: <path d="M0 3 C3 2 4 6 6 8 M3 10 C3 7 8 7 8 10 C8 13 3 13 3 10 M8 9 H10 M10 9 C10 6 15 6 15 9 C15 12 10 12 10 9 M15 8 C16 4 13 3 10 4" fill="none" /> },
  {
    id: "显示隐藏的图元",
    art: (
      <>
        <circle cx="8" cy="6" r="3" fill="#cfe5f4" stroke={BLUE} />
        <path d="M7 10 H9 V13 H7 Z" />
      </>
    ),
  },
  { id: "临时视图属性", art: <path d="M2 4 H14 V8 M2 4 V13 H8 M4 2 V4 M7 2 V4 M10 2 V4 M13 2 V4 M4 13 V15 M7 13 V15 M10 10 H15 V14 H10 Z" fill="#eceef0" strokeWidth="1.5" /> },
  {
    id: "分析模型",
    art: (
      <>
        <path d="M1 14 V5 L5 2 H11 M1 7 H11 M4 7 V14 M7 4 V14 M1 10 H11" />
        <circle cx="12" cy="6" r="3" fill="#ffd25a" stroke="#c98a1a" />
        <path d="M12 10 V14" strokeWidth="2" />
      </>
    ),
  },
  {
    id: "约束",
    art: (
      <>
        <path d="M1 2 V6 M15 2 V6 M1 4 H15 M1 9 V14 M3 13 H7" strokeDasharray="2 1" />
        <path d="M9 10 H15 V14 H9 Z M10 10 V8 H14 V10" fill="#9aa0a6" />
      </>
    ),
  },
];

function ElephantLogo() {
  return (
    <svg width="250" height="156" viewBox="0 0 250 156" className="shrink-0" aria-hidden="true">
      <path d="M5 107 Q23 94 44 86 L55 155 H22 Z" fill="#cfe6d6" />
      <path d="M17 58 C26 46 36 39 48 37 Q66 37 82 42 L91 155 H46 Z" fill="#7ad4d3" />
      <path d="M26 98 L44 86 L55 155 H46 Z" fill="#62c9b9" />
      <path d="M118 42 Q153 45 185 59 L198 92 C203 108 208 113 216 113 C223 111 226 104 225 93 Q229 94 232 97 Q237 93 243 95 C243 113 240 122 227 129 C213 136 201 133 192 125 L174 112 Q160 108 146 108 V155 H115 Z" fill="#a5dce9" />
      <path d="M44 30 Q70 13 99 3 Q126 12 148 27 L131 155 H115 V131 Q115 123 107 123 H99 Q91 123 91 131 V155 H68 Z" fill="#66d1f4" />
      <path d="M46 37 Q66 37 82 42 L91 131 V155 H68 Z" fill="#5fc3d4" />
      <path d="M118 42 Q133 43 146 47 L131 155 H115 V131 Z" fill="#62c6e0" />
      <path d="M146 108 Q172 109 193 119 Q187 139 180 155 H146 Z" fill="#96d1b2" />
      <path d="M174 112 L192 125 Q187 141 180 155 H163 Z" fill="#e9ebb8" />
      <ellipse cx="164" cy="84" rx="5.5" ry="6" fill="#fff" />
    </svg>
  );
}

function Watermark() {
  return (
    <div className="pointer-events-none absolute bottom-[25px] right-0 flex w-[720px] items-end text-[#66a3c2]">
      <ElephantLogo />
      <div className="ml-3 whitespace-nowrap">
        <p className="font-[Roboto] text-[75px] font-bold leading-[82px]">TUITUISOFT</p>
        <p className="pl-[122px] text-4xl leading-9">腿腿教学网</p>
      </div>
    </div>
  );
}

function NavBar() {
  return (
    <div className="absolute right-px top-[29px] flex h-[118px] w-9 flex-col items-center rounded-md border-2 border-[#cfcfcf] bg-[#f4f4f4]">
      <button aria-label="关闭导航栏" className="mr-0.5 mt-0.5 self-end">
        <svg width="9" height="9" viewBox="0 0 9 9" fill="#ddd" stroke="#aaa" aria-hidden="true"><circle cx="4.5" cy="4.5" r="4" /><path d="M3 3 L6 6 M6 3 L3 6" /></svg>
      </button>
      <button aria-label="二维控制盘" className="mt-2">
        <svg width="26" height="26" viewBox="0 0 26 26" fill="#ececec" stroke="#a9adb1" strokeWidth="1.3" aria-hidden="true">
          <path d="M11 1 H20 V11 A9.5 9.5 0 1 1 11 1 Z" />
          <circle cx="10.5" cy="10.5" r="4.5" fill="#f7f7f7" />
          <text x="12" y="24" fontSize="10" fontWeight="bold" fill="#7fa9c4" stroke="none" fontFamily="Liberation Sans">2D</text>
        </svg>
      </button>
      <Caret className="mt-1 opacity-50" />
      <span className="mt-1 h-px w-[26px] shrink-0 bg-[#cfcfcf]" />
      <button aria-label="区域放大" className="mt-2 pl-0.5">
        <svg width="18" height="18" viewBox="0 0 18 18" fill="none" stroke="#a9adb1" strokeWidth="1.3" aria-hidden="true">
          <rect x="1" y="1" width="11" height="11" fill="#d6cdae" />
          <circle cx="11" cy="11" r="3.5" fill="#fff" />
          <path d="M13.5 13.5 L17 17" strokeWidth="2" />
        </svg>
      </button>
      <Caret className="mt-1.5 opacity-50" />
      <span className="mb-1 mr-1 mt-auto size-2 self-end rounded-full border border-[#aaa] bg-[#ddd]" />
    </div>
  );
}

function DrawingArea() {
  return (
    <main className="ml-1 mr-[5px] flex min-w-0 flex-1 flex-col border-l-2 border-t border-[#828282] bg-white pb-0.5">
      <div className="flex min-h-0 flex-1">
        <div className="relative min-w-0 flex-1">
          <svg className="absolute inset-0 h-full w-full" fill="none" aria-hidden="true">
            <rect x="492.5" y="125.5" width="13" height="594" stroke="#b4b4b4" />
            <rect x="604.5" y="125.5" width="13" height="594" stroke="#b4b4b4" />
            <rect x="727.5" y="125.5" width="13" height="594" stroke="#2a2a2a" />
          </svg>
          <div className="absolute right-1 top-2 flex items-center gap-1.5">
            <button aria-label="最小化视图"><Small size={13}><path d="M1 8 H15 V12 H1 Z" fill="#fff" /></Small></button>
            <button aria-label="还原视图"><Small size={13}><path d="M4 1 H15 V12 H12 M4 1 V4 M1 4 H12 V15 H1 Z M4 8 H9 V12 H4 Z" strokeWidth="1.5" /></Small></button>
            <button aria-label="关闭视图"><Small size={13}><path d="M1 2 H5 L8 6 L11 2 H15 L10 8 L15 14 H11 L8 10 L5 14 H1 L6 8 Z" fill="#fff" strokeWidth="1.5" /></Small></button>
          </div>
          <NavBar />
        </div>
        <div className="flex w-[17px] flex-col items-center border-r-2 border-[#f7f7f7] bg-[#efefef] pb-1 pt-1.5">
          <Chevron d="M1 6.5 L4.5 3 L8 6.500" />
          <span className="flex w-full flex-1 flex-col pt-[409px]"><span className="h-[17px] bg-[#cdcdcd]" /></span>
          <Chevron d="M1 3 L4.5 6.500 L8 3" />
        </div>
      </div>
      <div className="flex h-4 shrink-0 items-center bg-[#f0f0f0]">
        <button className="w-[77px] whitespace-pre pl-[21px] text-left leading-4">1 : 100</button>
        {VIEW_CONTROLS.map((c) => (
          <button key={c.id} aria-label={c.id} className="flex w-[21px] justify-center"><Small size={15}>{c.art}</Small></button>
        ))}
        <Chevron d="M6.5 1 L3 4.5 L6.500 8" className="ml-1" />
        <span className="flex flex-1 items-center pl-[505px]"><span className="h-[15px] w-[17px] bg-[#cdcdcd]" /></span>
        <Chevron d="M3 1 L6.5 4.500 L3 8" className="mr-5" />
      </div>
    </main>
  );
}

const CURSOR = <path d="M9 6 V15 L11 13 L12.5 16 L14 15.5 L12.7 12.5 H15.5 Z" fill="#fff" strokeWidth=".9" />;

const SELECT_TOGGLES = [
  { id: "选择链接", art: <><path d="M1 3 H7 V7 H1 Z M8 3 H14 V7 H8 Z" fill="#ffd97a" stroke="#c67a10" strokeWidth="1.5" />{CURSOR}</> },
  { id: "选择基线图元", art: <><path d="M1 12 L8 3 V12 Z M1 15 H9" fill="#cfe5f4" stroke={BLUE} /><path d="M10 1 L15 6 M15 1 L10 6" stroke="#d0651b" strokeWidth="1.8" />{CURSOR}</> },
  { id: "选择锁定图元", art: <><path d="M2 1 H10 V3 L8 4 V7 L10 9 H2 L4 7 V4 L2 3 Z M6 9 V14" fill="#ffc04d" stroke="#a9641c" />{CURSOR}</> },
  { id: "按面选择图元", art: <><path d="M1 4 L9 1 V12 L1 14 Z" fill={SKY} stroke={BLUE} />{CURSOR}</> },
  { id: "选择时拖拽图元", art: <><path d="M5 1 V11 M0 6 H10 M3 3 L5 1 L7 3 M3 9 L5 11 L7 9" /><path d="M10 1 L15 6 M15 1 L10 6" stroke="#d0651b" strokeWidth="1.8" />{CURSOR}</> },
  { id: "后台进程", art: <circle cx="8" cy="8" r="5" stroke="#a3a3a3" strokeWidth="3" strokeDasharray="3 1" /> },
];

function StatusBar() {
  return (
    <footer className="flex h-6 shrink-0 items-center border-t-2 border-[#9c9c9c] bg-[#d4d4d4] text-black">
      <p className="flex-1 whitespace-nowrap pl-0.5">单击可进行选择; 按 Tab 键并单击可选择其他项目; 按 Ctrl 键并单击可将新项目添加到选择集; 按 Shift 键并单击可取消选择。</p>
      <Small>
        <g stroke="#8f8f8f" fill="#c2c2c2"><path d="M1 8 L3 5 L5 8 V15 H1 Z M6 7 L8 4 L10 7 V15 H6 Z M11 8 L13 5 L15 8 V15 H11 Z" /><circle cx="6" cy="3" r="2" /><circle cx="10" cy="3" r="2" /></g>
      </Small>
      <select aria-label="活动工作集" className="ml-2 h-[18px] w-[204px] appearance-none bg-white" />
      <Chevron d="M1 3 L4.5 6.500 L8 3" className="-ml-3 opacity-50" />
      <span className="ml-3 flex w-[54px] items-center gap-[5px]">
        <Small><path d="M5 1 H14 V5 L8 6 L5 10 M1 15 L4 9 L8 15 Z M5 1 V5" fill="#b0b0b0" stroke="#8f8f8f" /></Small>
        :0
      </span>
      <button aria-label="设计选项列表"><Small><path d="M1 1 H15 V15 H1 Z" fill="#f4f4f4" /><path d="M1 2.5 H15 M4 6 H6 M4 9 H6 M4 12 H6 M8 6 H13 M8 9 H13 M8 12 H13" strokeWidth="1.5" /></Small></button>
      <button disabled aria-label="添加到集" className="ml-2.5"><Small><path d="M4 1 H15 V15 H4 Z" fill="#9c9c9c" stroke="none" /><path d="M0 9 H7 V6 L12 11 L7 15 V12 H0 Z" fill="#d8d8d8" stroke="#9c9c9c" /></Small></button>
      <select aria-label="设计选项" className="ml-2 h-[18px] w-[204px] appearance-none bg-white pl-0.5 leading-4 text-[#666]">
        <option>主模型</option>
      </select>
      <Chevron d="M1 3 L4.5 6.500 L8 3" className="-ml-3 opacity-50" />
      <div className="ml-[180px] flex w-[248px] items-center gap-2.5 pl-0.5">
        {SELECT_TOGGLES.map((t) => <button key={t.id} aria-label={t.id}><Small>{t.art}</Small></button>)}
        <button className="-ml-1 flex items-center"><Small size={18}><path d="M1 1 H15 V3 L9.5 9 V14 L6.5 12 V9 L1 3 Z" fill="#a5aab0" /></Small>:0</button>
      </div>
    </footer>
  );
}

export default function App() {
  return (
    <div className="relative flex h-screen flex-col overflow-hidden bg-[#d4d4d4] font-['Noto_Sans','Noto_Sans_CJK_SC',sans-serif] text-xs text-black">
      <svg width="0" height="0" className="absolute" aria-hidden="true">
        <defs>
          <linearGradient id="steel" x1="0" y1="0" x2="1" y2="1"><stop offset="0" stopColor="#c8ccd1" /><stop offset="1" stopColor="#fafafa" /></linearGradient>
          <linearGradient id="steelH"><stop offset="0" stopColor="#b3b8be" /><stop offset=".5" stopColor="#fff" /><stop offset="1" stopColor="#a6abb2" /></linearGradient>
          <pattern id="hatch" width="3" height="3" patternUnits="userSpaceOnUse"><rect width="3" height="3" fill="#c6c9cd" /><path d="M0 3 L3 0" stroke="#7b8087" strokeWidth=".9" /></pattern>
        </defs>
      </svg>
      <TitleBar />
      <TabRow />
      <Ribbon />
      <div className="flex min-h-0 flex-1 bg-[#f5f6f6] pt-[27px]">
        <PropertiesPanel />
        <DrawingArea />
        <ProjectBrowser />
      </div>
      <StatusBar />
      <Watermark />
    </div>
  );
}
